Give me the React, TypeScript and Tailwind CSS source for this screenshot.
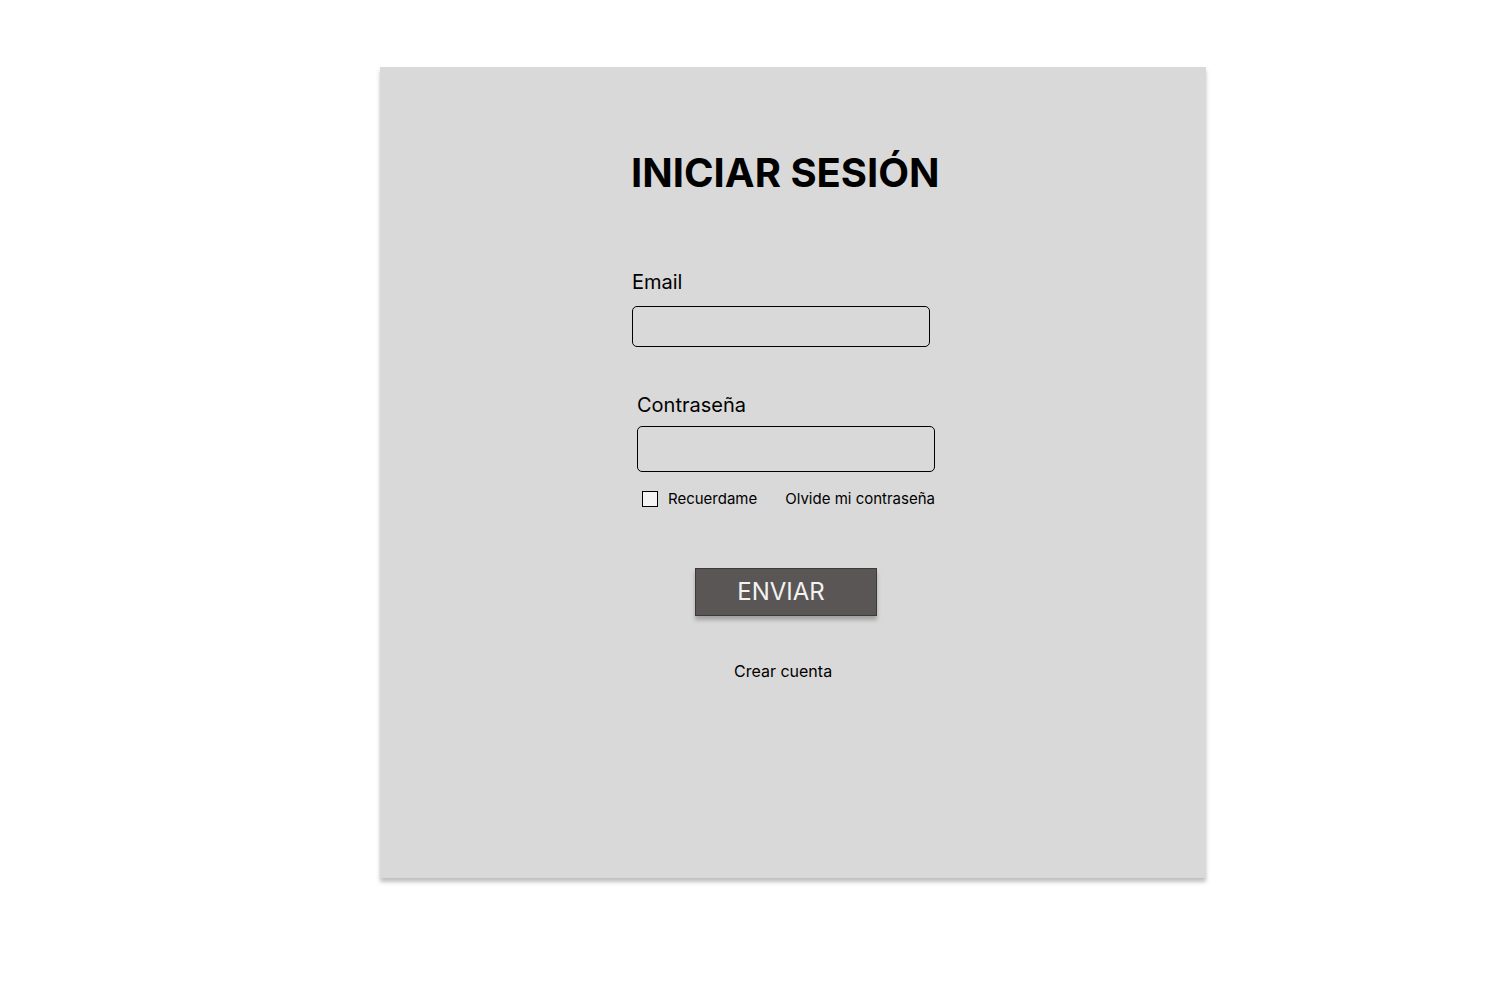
export default function App() {
  return (
    <div className="min-h-[982px] w-full bg-white pt-[67px] pl-[380px]" style={{ fontFamily: "Inter, 'Noto Sans', sans-serif" }}>
      <div className="flex h-[811px] w-[826px] flex-col bg-[#d9d9d9] shadow-[0_4px_4px_rgba(0,0,0,0.25)]">
        {/*titulo*/}
        <h1 className="ml-[251px] mt-[81px] text-[40px] font-bold leading-[50px] text-black">INICIAR SESIÓN</h1>

        {/*email*/}
        <label className="ml-[252px] mt-[72px] text-[20px] leading-[24px] text-black">Email</label>
        <input type="email" className="ml-[252px] mt-[12px] h-[41px] w-[298px] rounded-[5px] border border-black bg-transparent outline-none" />

        {/*contraseña*/}
        <label className="ml-[257px] mt-[46px] text-[20px] leading-[24px] text-black">Contraseña</label>
        <input type="password" className="ml-[257px] mt-[9px] h-[46px] w-[298px] rounded-[5px] border border-black bg-transparent outline-none" />

        <div className="ml-[262px] mt-[18px] flex w-[293px] items-center text-[15px] leading-[18px] text-black">
          <span className="h-[16px] w-[16px] border border-black bg-[#f4f4f4]" />
          <span className="ml-[10px]">Recuerdame</span>
          <span className="ml-auto">Olvide mi contraseña</span>
        </div>

        {/*boton*/}
        <button className="ml-[315px] mt-[60px] flex h-[48px] w-[182px] items-center justify-center border border-[#3e3a39] bg-[#5a5655] pr-[10px] text-[24px] text-[#f2f2f2] shadow-[0_4px_4px_rgba(0,0,0,0.25)]">
          ENVIAR
        </button>

        <a className="ml-[354px] mt-[45px] text-[16px] leading-[20px] text-black">Crear cuenta</a>
      </div>
    </div>
  )
}
